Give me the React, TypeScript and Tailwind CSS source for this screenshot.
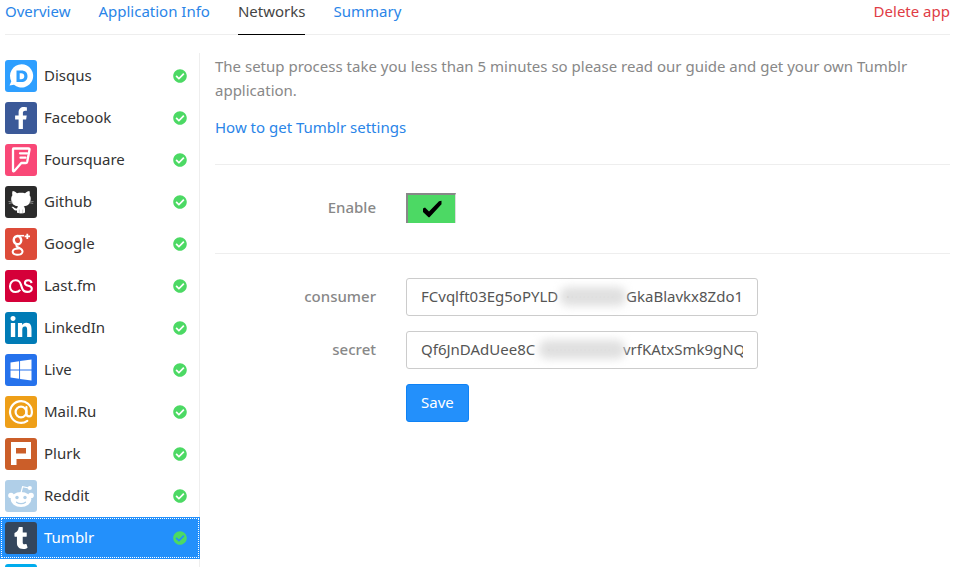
import type { ReactNode } from "react";
import {
  FaCheckCircle,
  FaFacebookF,
  FaLinkedinIn,
  FaTumblr,
  FaTwitter,
  FaWindows,
} from "react-icons/fa";

function DisqusIcon() {
  return (
    <svg viewBox="0 0 32 32" className="size-8" aria-hidden="true">
      <path fill="#fff" d="M16.500 4.300a11.600 11.600 0 1 1-7.500 20.400L4.500 25.500l1.800-4.300A11.600 11.600 0 0 1 16.500 4.300z" />
      <path fill="#2e9fff" fillRule="evenodd" d="M11.500 10.500h5c3.700 0 6 2.100 6 5.700s-2.400 5.800-6.100 5.800h-4.900zM14.700 13.300v5.900h1.400c2 0 3.200-1 3.200-2.900s-1.200-3-3.100-3z" />
    </svg>
  );
}

function FoursquareIcon() {
  return (
    <svg viewBox="0 0 32 32" className="size-8" aria-hidden="true">
      <g fill="none" stroke="#fff" strokeWidth="2.300" strokeLinejoin="round" strokeLinecap="round">
        <path d="M8.500 4.500h15c.8 0 1.200.5 1 1.200l-2.300 12c-.2.900-.7 1.300-1.500 1.300h-4.400l-7 7.900c-.6.700-1.300.5-1.300-.4V5.500c0-.6.2-1 .5-1z" />
        <path d="M22 9.300h-7M20.500 13.700h-5" />
      </g>
    </svg>
  );
}

function OctocatIcon() {
  return (
    <svg viewBox="0 0 32 32" className="size-8" aria-hidden="true">
      <path
        fill="#fff"
        d="M7.700 5c1.700.2 3.200 1.200 4.300 2.200 2.500-.6 5.500-.6 8 0C21.200 6.100 22.700 5.200 24.300 5c.7 1.500.6 3 .3 4.200 1 1.200 1.300 2.700 1.100 4.400-.4 4.600-3 6.300-7 6.800.8.7 1.300 1.700 1.300 2.900v3.300c-1 .8-2.400.9-4 .9s-3-.1-4-.9v-2.100c-3.200.3-3.700-2.400-5-3.100-.5-.3-.3-.7.300-.7 2.200 0 2.300 2.300 4.700 1.800.1-.9.500-1.600 1.100-2.100-4-.5-6.500-2.300-6.900-6.800-.1-1.700.2-3.200 1.200-4.400-.3-1.200-.4-2.700.3-4.200z"
      />
      <path stroke="#aaa" strokeWidth=".7" fill="none" d="M3.500 15.500l4 .4M3.800 17.500l4-.7M28.500 15.500l-4 .4M28.200 17.500l-4-.7" />
      <path stroke="#aaa" strokeWidth=".6" fill="none" d="M14.300 23.500v4M17.700 23.500v4" />
    </svg>
  );
}

function GooglePlusIcon() {
  return (
    <svg viewBox="0 0 32 32" className="size-8" aria-hidden="true">
      <g fill="none" stroke="#fff">
        <ellipse cx="12.500" cy="12.200" rx="3.700" ry="4.100" strokeWidth="2.500" transform="rotate(-12 12.500 12.200)" />
        <path strokeWidth="1.600" d="M19 7.700h-6" />
        <path strokeWidth="2" d="M11.800 16.500c-1 1.500.2 2.200 1.700 3 2.200 1.200 4.400 2 4 4.400-.4 2.200-2.900 3-5.700 2.800-2.800-.2-4.300-1.400-4.100-3.200.2-2.200 3-3.200 7-3" />
        <path strokeWidth="1.800" d="M22.300 5.700v5.400M19.600 8.400H25" />
      </g>
    </svg>
  );
}

function LastfmIcon() {
  return (
    <svg viewBox="0 0 32 32" className="size-8" aria-hidden="true">
      <path
        fill="none"
        stroke="#fff"
        strokeWidth="2.100"
        d="M15.200 19.800c-1.100 1.500-2.700 2.200-4.600 2.200-3.400 0-5.600-2.300-5.600-5.800 0-3.600 2.300-5.900 5.600-5.900 3 0 4.300 1.400 5.200 4l1.400 4.100c.8 2.400 2.300 3.500 5 3.500 2.800 0 4.600-1.100 4.600-3.100 0-1.900-1.100-2.500-3.500-3-2.200-.5-3.400-.9-3.400-2.700 0-1.700 1.200-2.800 3.200-2.800 2.100 0 3.200.9 3.400 2.800"
      />
    </svg>
  );
}

function AtIcon() {
  return (
    <svg viewBox="0 0 32 32" className="size-8" aria-hidden="true">
      <g fill="none" stroke="#fff" strokeWidth="2.200">
        <circle cx="16" cy="16" r="5.400" />
        <path strokeLinecap="round" d="M21.400 11v6.200c0 2.200 1.200 3.200 2.700 3.200 1.700 0 2.800-1.700 2.800-4.400A10.900 10.900 0 1 0 22.300 24.900" />
      </g>
    </svg>
  );
}

function PlurkIcon() {
  return (
    <svg viewBox="0 0 32 32" className="size-8" aria-hidden="true">
      <path fill="#fff" fillRule="evenodd" d="M6 4h20v17H11.500v6H6zM11 10v5.500h10V10z" />
    </svg>
  );
}

function RedditIcon() {
  return (
    <svg viewBox="0 0 32 32" className="size-8" aria-hidden="true">
      <g fill="#fff">
        <ellipse cx="16" cy="19.500" rx="10.300" ry="7.500" />
        <circle cx="6" cy="15.500" r="2.800" />
        <circle cx="26" cy="15.500" r="2.800" />
        <circle cx="24.800" cy="8" r="2.100" />
      </g>
      <path fill="none" stroke="#fff" strokeWidth="1.200" d="M16 13l1.600-6.300 6.200 1.300" />
      <g fill="#b0cfe8">
        <circle cx="12" cy="17.500" r="1.700" />
        <circle cx="20" cy="17.500" r="1.700" />
      </g>
      <path fill="none" stroke="#b0cfe8" strokeWidth="1.200" strokeLinecap="round" d="M11.500 22.200c2.500 2 6.500 2 9 0" />
    </svg>
  );
}

function HeavyCheck() {
  return (
    <svg viewBox="0 0 20 18" className="h-[18px] w-5" aria-hidden="true">
      <path fill="#000" d="M1 8.500l2-.9 4 3.900L17 1.300l2.500-.5v3.500L7.500 17.300h-1L1 12z" />
    </svg>
  );
}

type Network = { name: string; tile: string; icon: ReactNode };

const networks: Network[] = [
  { name: "Disqus", tile: "bg-[#2e9fff]", icon: <DisqusIcon /> },
  { name: "Facebook", tile: "bg-[#3b5998]", icon: <FaFacebookF className="size-[22px]" /> },
  { name: "Foursquare", tile: "bg-[#f94877]", icon: <FoursquareIcon /> },
  { name: "Github", tile: "bg-[#2b2b2b]", icon: <OctocatIcon /> },
  { name: "Google", tile: "bg-[#dd4b39]", icon: <GooglePlusIcon /> },
  { name: "Last.fm", tile: "bg-[#d50039]", icon: <LastfmIcon /> },
  { name: "LinkedIn", tile: "bg-[#007bb6]", icon: <FaLinkedinIn className="size-6" /> },
  { name: "Live", tile: "bg-[#2672ec]", icon: <FaWindows className="size-6" /> },
  { name: "Mail.Ru", tile: "bg-[#ee9f18]", icon: <AtIcon /> },
  { name: "Plurk", tile: "bg-[#cb5e29]", icon: <PlurkIcon /> },
  { name: "Reddit", tile: "bg-[#b0cfe8]", icon: <RedditIcon /> },
  { name: "Tumblr", tile: "bg-[#34465d]", icon: <FaTumblr className="size-[22px]" /> },
];

const tabs = ["Overview", "Application Info", "Networks", "Summary"];

function Tabs({ current }: { current: string }) {
  return (
    <nav className="mr-1 ml-[5px] flex h-[35px] shrink-0 items-stretch justify-between border-b border-[#eeeeee] leading-[22px]">
      <div className="flex gap-7">
        {tabs.map((tab) => (
          <a
            key={tab}
            href="#"
            className={tab === current ? "-mb-px border-b border-black text-[#444444]" : "text-[#2a85e8]"}
          >
            {tab}
          </a>
        ))}
      </div>
      <a href="#" className="text-[#e03c46]">
        Delete app
      </a>
    </nav>
  );
}

function Sidebar({ current }: { current: string }) {
  return (
    <aside className="w-[200px] shrink-0 border-r border-[#eeeeee]">
      <ul className="-mr-px pt-0.5">
        {networks.map(({ name, tile, icon }) => (
          <li key={name}>
            <a
              href="#"
              className={
                name === current
                  ? "flex h-[42px] items-center bg-[#2390fb] pr-[13px] pl-[5px] text-white outline-1 -outline-offset-2 outline-dotted outline-white"
                  : "flex h-[42px] items-center pr-[13px] pl-[5px] text-[#333333]"
              }
            >
              <span className={`flex size-8 shrink-0 items-center justify-center rounded-[3px] text-white ${tile}`}>{icon}</span>
              <span className="ml-[7px] flex-1 pb-[3px]">{name}</span>
              <FaCheckCircle className="size-[14px] text-[#4cd964]" />
            </a>
          </li>
        ))}
        <li>
          <a href="#" aria-label="Twitter" className="flex h-[42px] items-center pl-[5px]">
            <span className="flex size-8 items-center justify-center rounded-[3px] bg-[#00aced] text-white">
              <FaTwitter className="size-5" />
            </span>
          </a>
        </li>
      </ul>
    </aside>
  );
}

function Field({ id, value, mask }: { id: string; value: string; mask: string }) {
  return (
    <div className="mb-[15px] flex items-center">
      <label htmlFor={id} className="w-[161px] pb-0.5 text-right font-medium text-[#888888]">
        {id}
      </label>
      <div className="relative ml-[30px] w-[352px]">
        <input
          id={id}
          type="text"
          defaultValue={value}
          className="h-[38px] w-full rounded-[3px] border border-[#cccccc] bg-white px-[14px] pb-0.5 text-[#555555]"
        />
        <span className={`absolute top-[9px] h-[19px] rounded-lg bg-[#e0e0e0] blur-[4px] ${mask}`} />
      </div>
    </div>
  );
}

export default function App() {
  return (
    <div className="flex h-screen flex-col overflow-hidden bg-white font-['Noto_Sans',sans-serif] text-[15px] leading-6">
      <Tabs current="Networks" />
      <div className="mt-[18px] flex min-h-0 flex-1">
        <Sidebar current="Tumblr" />
        <main className="mr-1 ml-[15px] flex-1">
          <p className="mt-px text-[#888888]">
            The setup process take you less than 5 minutes so please read our guide and get your own Tumblr application.
          </p>
          <p className="mt-[13px]">
            <a href="#" className="text-[#2a85e8]">
              How to get Tumblr settings
            </a>
          </p>
          <form onSubmit={(event) => event.preventDefault()}>
            <div className="mt-[25px] flex items-center border-y border-[#eeeeee] pt-[28px] pb-[30px]">
              <span id="enable" className="w-[161px] pb-0.5 text-right font-medium text-[#888888]">
                Enable
              </span>
              <button
                type="button"
                aria-labelledby="enable"
                aria-pressed="true"
                className="ml-[30px] flex h-[30px] w-[50px] items-center justify-center border-t-2 border-r border-l-2 border-t-[#888888] border-r-[#dddddd] border-l-[#888888] bg-[#4cd964]"
              >
                <HeavyCheck />
              </button>
            </div>
            <div className="pt-6">
              <Field id="consumer" value="FCvqlft03Eg5oPYLD  ············   GkaBlavkx8Zdo1lmQ4" mask="left-[154px] w-[66px]" />
              <Field id="secret" value="Qf6JnDAdUee8C   ················   vrfKAtxSmk9gNQb3" mask="left-[133px] w-[86px]" />
              <button
                type="submit"
                className="ml-[191px] h-[38px] rounded-[3px] border border-[#0f82f5] bg-[#2390fb] px-[14px] pb-0.5 text-white"
              >
                Save
              </button>
            </div>
          </form>
        </main>
      </div>
    </div>
  );
}
